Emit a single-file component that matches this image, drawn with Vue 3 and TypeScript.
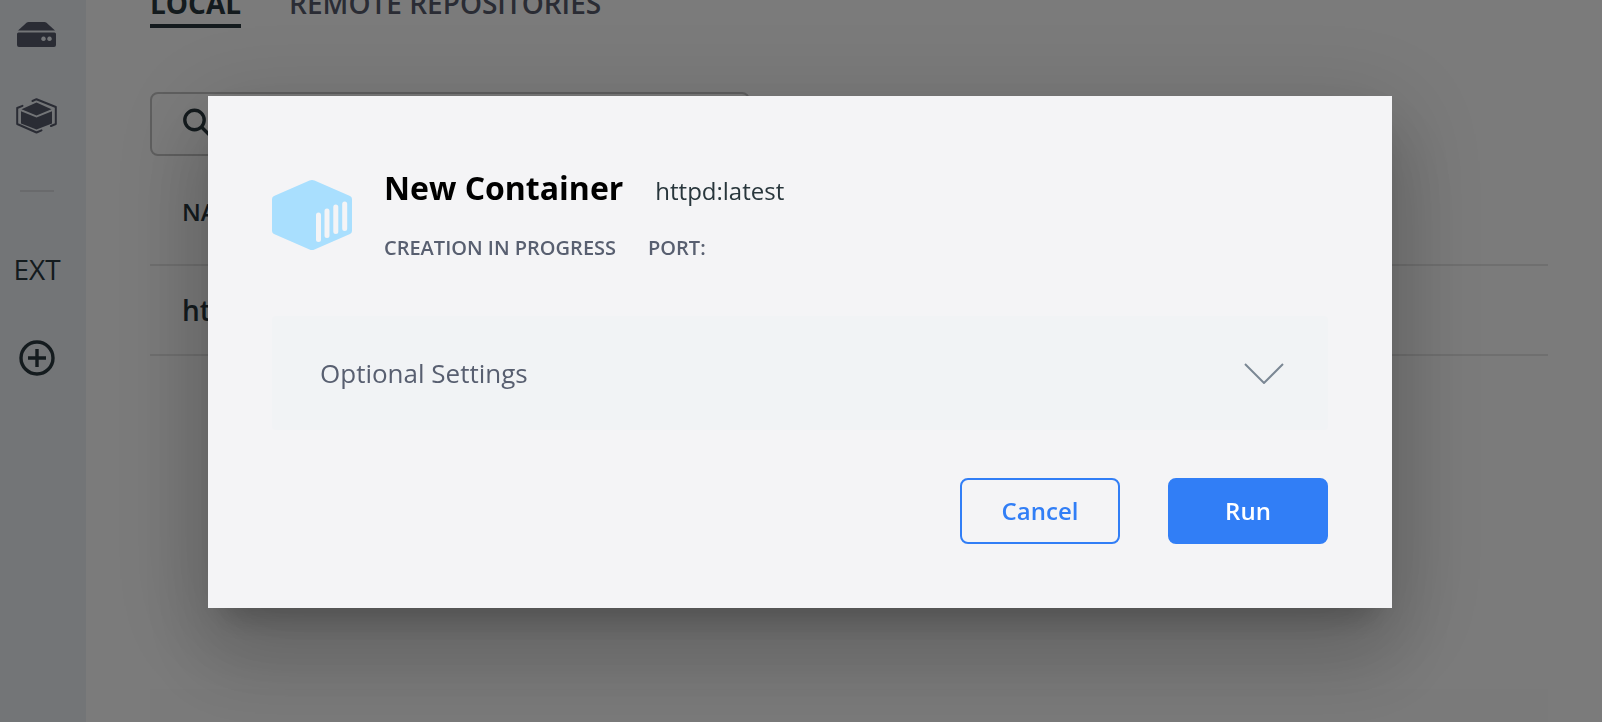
<script setup lang="ts">
import { ref } from 'vue'

const search = ref('')
const expanded = ref(false)
const tabs = ['LOCAL', 'REMOTE REPOSITORIES']
const activeTab = ref('LOCAL')
const image = { name: 'httpd', tag: 'latest' }
</script>

<template>
  <div class="app">
    <nav class="sidebar" aria-label="Main">
      <a href="#images" class="nav-item" aria-label="Images">
        <svg width="40" height="26" viewBox="0.5 0 40 26">
          <path d="M12 0H28Q29 0 30 .8L38.500 8.500H1.500L10 .8Q11 0 12 0Z" />
          <path fill-rule="evenodd" d="M2 10.500H38Q39.500 10.500 39.500 12V23Q39.500 25 37.500 25H2.500Q.5 25 .5 23V12Q.5 10.500 2 10.500ZM27 14.500a2.300 2.300 0 1 0 .01 0ZM33 14.500a2.300 2.300 0 1 0 .01 0Z" />
        </svg>
      </a>
      <a href="#containers" class="nav-item" aria-label="Containers">
        <svg width="42" height="36" viewBox="0.5 0 42 36">
          <path d="M21 4.500L36 11.200L21 17.500L6 11.200Z" />
          <path d="M5.500 13.300L21 19.500L36.500 13.300V25.500L21 31.500L5.500 25.500Z" />
          <path class="outline" d="M17 3L21 1.200L40.300 9V26L35.500 28M7 7.800L1.700 10V26L21 34.500L26 32.300" />
        </svg>
      </a>
      <hr />
      <span class="ext">EXT</span>
      <button class="add" type="button" aria-label="Add extension">
        <svg width="36" height="36" viewBox="0 0 36 36">
          <circle cx="18" cy="18" r="16" />
          <path d="M9 18H27M18 9V27" />
        </svg>
      </button>
    </nav>

    <main class="main">
      <div class="tabs">
        <button
          v-for="tab in tabs"
          :key="tab"
          type="button"
          :class="['tab', { active: tab === activeTab }]"
          @click="activeTab = tab"
        >{{ tab }}</button>
      </div>
      <label class="search">
        <svg width="32" height="32" viewBox="0 0 32 32" aria-hidden="true">
          <circle cx="12.500" cy="12" r="9.700" />
          <path d="M19.500 19L29 28.500" />
        </svg>
        <input v-model="search" type="text" aria-label="Search" />
      </label>
      <table class="images">
        <thead><tr><th>NAME</th></tr></thead>
        <tbody><tr><td>{{ image.name }}</td></tr></tbody>
      </table>
      <div class="footer-panel"></div>
    </main>

    <div class="backdrop">
      <section class="dialog" role="dialog" aria-modal="true" aria-labelledby="dialog-title">
        <header class="head">
          <svg class="cube" width="80" height="70" viewBox="0 0 80 70" aria-hidden="true">
            <path d="M37.500 .6Q40 -.5 42.500 .6L78 16Q80 17 80 19V51Q80 53 78 54L42.500 69.400Q40 70.500 37.500 69.400L2 54Q0 53 0 51V19Q0 17 2 16Z" />
            <path class="slat" d="M46.500 35V59.500M55 31V55.500M63.800 27V51.500M72.700 24V48.500" />
          </svg>
          <div>
            <div class="title-row">
              <h1 id="dialog-title">New Container</h1>
              <span class="image-name">{{ image.name }}:{{ image.tag }}</span>
            </div>
            <div class="status">
              <span>CREATION IN PROGRESS</span>
              <span>PORT:</span>
            </div>
          </div>
        </header>

        <button class="settings" type="button" :aria-expanded="expanded" @click="expanded = !expanded">
          <span>Optional Settings</span>
          <svg width="40" height="22" viewBox="0 0 40 22" aria-hidden="true">
            <path d="M1 2L20 21L39 2" />
          </svg>
        </button>

        <footer class="actions">
          <button type="button" class="btn">Cancel</button>
          <button type="button" class="btn primary">Run</button>
        </footer>
      </section>
    </div>
  </div>
</template>

<style>
body {
  margin: 0;
  overflow: hidden;
}
</style>

<style scoped>
.app {
  display: flex;
  height: 100vh;
  overflow: hidden;
  background: #f7f7f7;
  color: #28363c;
  font-family: "Open Sans", "Noto Sans", sans-serif;
}
button {
  font: inherit;
  color: inherit;
  background: none;
  border: 0;
  padding: 0;
  cursor: pointer;
}
svg {
  display: block;
  flex: none;
}
.sidebar {
  flex: none;
  box-sizing: border-box;
  width: 86px;
  padding: 22px 12px 0 0;
  display: flex;
  flex-direction: column;
  align-items: center;
  background: #e6eaef;
}
.nav-item {
  margin-bottom: 50px;
  fill: #545869;
}
.outline {
  fill: none;
  stroke: #545869;
  stroke-width: 2;
  stroke-linecap: round;
  stroke-linejoin: round;
}
.sidebar hr {
  width: 34px;
  height: 2px;
  margin: 6px 0 58px;
  border: 0;
  background: #d2d5d9;
}
.ext {
  font-size: 28px;
  line-height: 38px;
}
.add {
  margin-top: 52px;
}
.add svg {
  fill: none;
  stroke: #28363c;
  stroke-width: 3.4;
}
.main {
  flex: 1;
  min-width: 0;
  padding: 0 54px 0 64px;
  display: flex;
  flex-direction: column;
}
.tabs {
  display: flex;
  gap: 48px;
  margin-top: -16px;
}
.tab {
  flex: none;
  padding-bottom: 2px;
  font-size: 28px;
  line-height: 38px;
  font-weight: 600;
  color: #545869;
  border-bottom: 4px solid transparent;
}
.tab.active {
  color: #28363c;
  font-weight: 700;
  border-color: #28363c;
}
.search {
  box-sizing: border-box;
  width: 600px;
  height: 64px;
  margin-top: 64px;
  padding: 0 30px;
  display: flex;
  align-items: center;
  gap: 16px;
  border: 2px solid #bebebe;
  border-radius: 8px;
}
.search svg {
  fill: none;
  stroke: #28363c;
  stroke-width: 3.4;
}
.search input {
  flex: 1;
  border: 0;
  outline: 0;
  background: none;
  font: inherit;
  font-size: 24px;
}
.images {
  width: 100%;
  margin-top: 4px;
  border-collapse: separate;
  border-spacing: 0;
  text-align: left;
}
.images th,
.images td {
  padding: 0 32px;
  border-bottom: 2px solid #dedede;
  font-weight: 600;
}
.images th {
  height: 102px;
  padding-bottom: 2px;
  font-size: 24px;
}
.images td {
  height: 88px;
  font-size: 28px;
  line-height: 40px;
}
.footer-panel {
  flex: none;
  height: 33px;
  margin-top: auto;
  background: #f5f5f5;
}
.backdrop {
  position: fixed;
  inset: 0;
  padding: 96px 210px 0 208px;
  background: rgba(0, 0, 0, 0.5);
}
.dialog {
  padding: 64px;
  background: #f4f4f6;
  box-shadow:
    0 22px 30px -14px rgba(0, 0, 0, 0.2),
    0 48px 76px 6px rgba(0, 0, 0, 0.14),
    0 18px 92px 16px rgba(0, 0, 0, 0.12);
}
.head {
  display: flex;
  gap: 32px;
}
.cube {
  margin-top: 20px;
  fill: #a9dffe;
}
.slat {
  stroke: #f4f4f6;
  stroke-width: 5;
  stroke-linecap: round;
}
.title-row {
  display: flex;
  align-items: baseline;
  gap: 32px;
}
h1 {
  margin: 0;
  font-size: 32px;
  line-height: 56px;
  font-weight: 700;
  color: #000;
}
.image-name {
  font-size: 24px;
}
.status {
  display: flex;
  gap: 32px;
  margin-top: 16px;
  font-size: 20px;
  line-height: 32px;
  font-weight: 600;
  color: #585f70;
}
.settings {
  box-sizing: border-box;
  width: 100%;
  height: 114px;
  margin: 52px 0 48px;
  padding: 0 44px 0 48px;
  display: flex;
  align-items: center;
  justify-content: space-between;
  background: #f1f3f5;
  border-radius: 4px;
  color: #585f70;
  font-size: 26px;
}
.settings svg {
  fill: none;
  stroke: #7b8794;
  stroke-width: 2;
}
.actions {
  display: flex;
  justify-content: flex-end;
  gap: 48px;
}
.btn {
  box-sizing: border-box;
  width: 160px;
  height: 66px;
  padding-bottom: 2px;
  border: 2px solid #317ef6;
  border-radius: 8px;
  color: #317ef6;
  font-size: 24px;
  font-weight: 600;
}
.btn.primary {
  background: #317ef6;
  color: #fff;
}
</style>
